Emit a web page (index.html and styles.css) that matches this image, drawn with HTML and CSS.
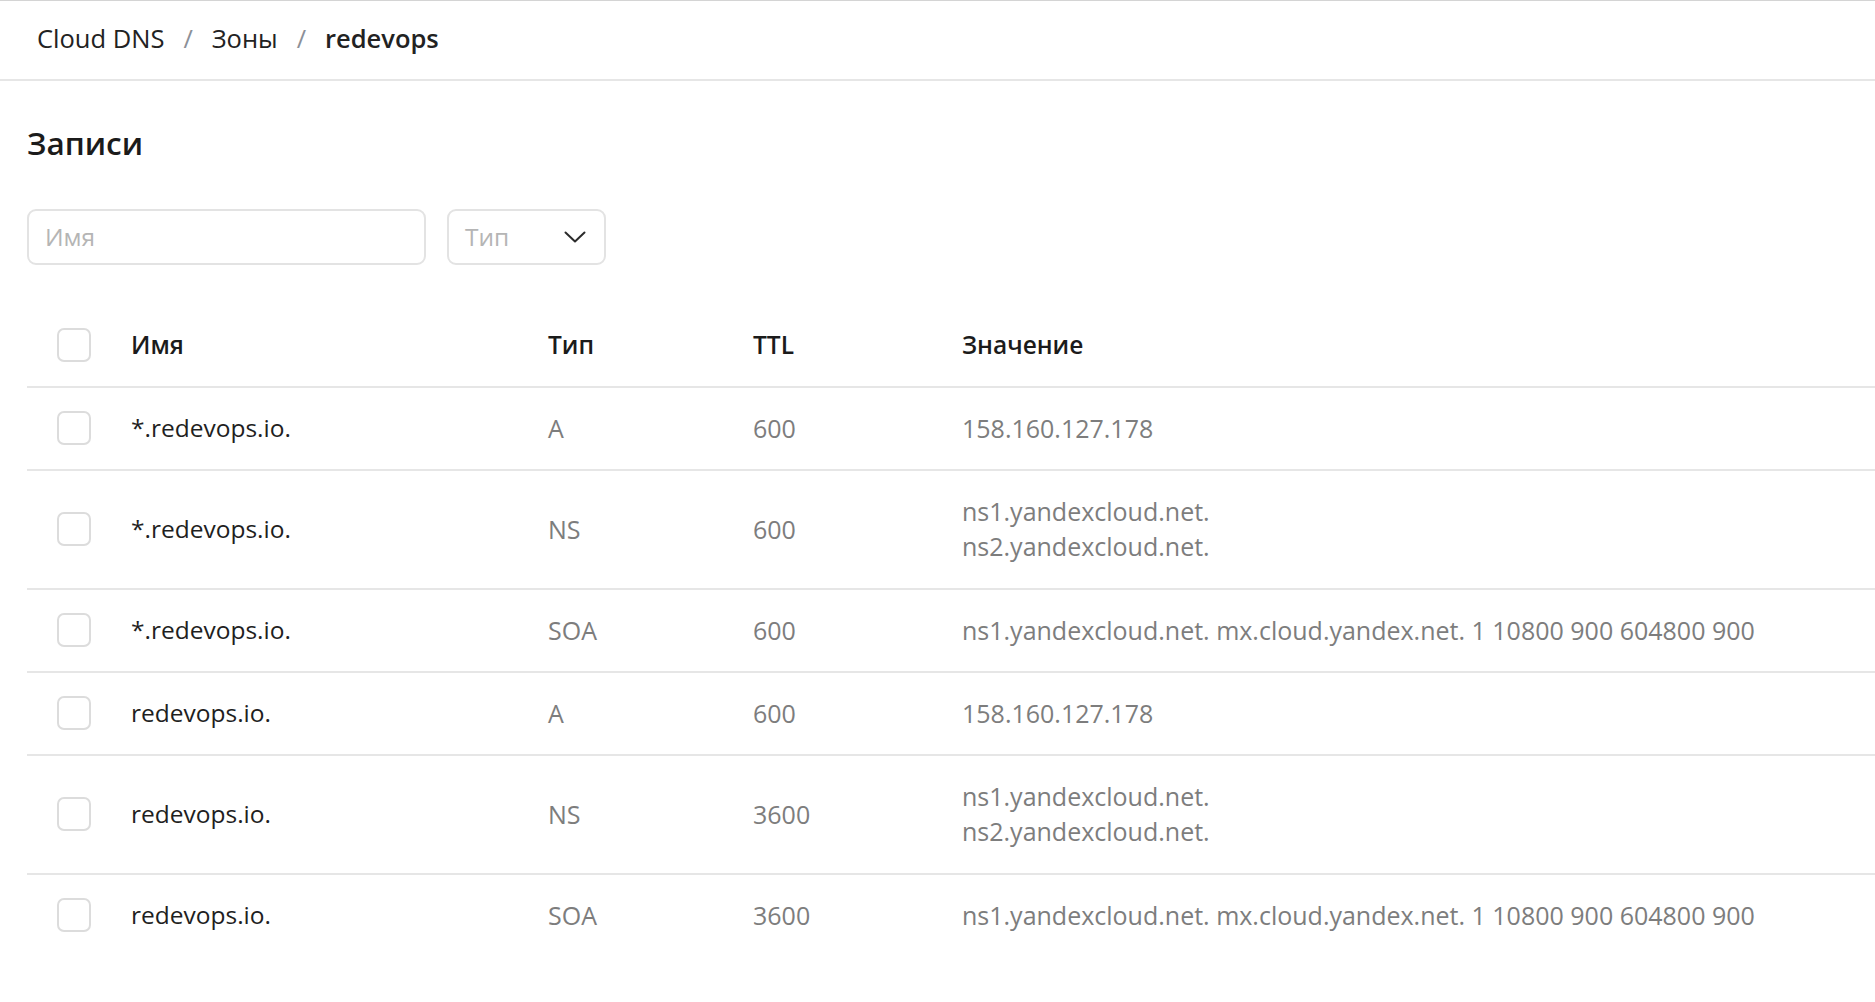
FILE: index.html
```html
<!DOCTYPE html>
<html lang="ru">
<head>
<meta charset="utf-8">
<title>Cloud DNS — redevops</title>
<link rel="stylesheet" href="styles.css">
</head>
<body>
<header class="topbar">
  <nav class="crumbs">
    <span class="crumb">Cloud DNS</span>
    <span class="sep">/</span>
    <span class="crumb">Зоны</span>
    <span class="sep">/</span>
    <span class="crumb current">redevops</span>
  </nav>
</header>
<main class="content">
  <h1 class="title">Записи</h1>
  <div class="filters">
    <div class="input"><span class="placeholder">Имя</span></div>
    <div class="select">
      <span class="placeholder">Тип</span>
      <svg class="chev" width="22" height="12" viewBox="0 0 22 12"><path d="M1.5 1.5 L11 10.5 L20.5 1.5" fill="none" stroke="#2b2b2b" stroke-width="2" stroke-linecap="round" stroke-linejoin="round"/></svg>
    </div>
  </div>
  <table class="records">
    <colgroup>
      <col class="c-check"><col class="c-name"><col class="c-type"><col class="c-ttl"><col class="c-value">
    </colgroup>
    <thead>
      <tr>
        <th><span class="box"></span></th>
        <th>Имя</th>
        <th>Тип</th>
        <th>TTL</th>
        <th>Значение</th>
      </tr>
    </thead>
    <tbody>
      <tr>
        <td><span class="box"></span></td>
        <td class="name">*.redevops.io.</td>
        <td class="muted">A</td>
        <td class="muted">600</td>
        <td class="muted">158.160.127.178</td>
      </tr>
      <tr>
        <td><span class="box"></span></td>
        <td class="name">*.redevops.io.</td>
        <td class="muted">NS</td>
        <td class="muted">600</td>
        <td class="muted"><div class="line">ns1.yandexcloud.net.</div><div class="line">ns2.yandexcloud.net.</div></td>
      </tr>
      <tr>
        <td><span class="box"></span></td>
        <td class="name">*.redevops.io.</td>
        <td class="muted">SOA</td>
        <td class="muted">600</td>
        <td class="muted">ns1.yandexcloud.net. mx.cloud.yandex.net. 1 10800 900 604800 900</td>
      </tr>
      <tr>
        <td><span class="box"></span></td>
        <td class="name">redevops.io.</td>
        <td class="muted">A</td>
        <td class="muted">600</td>
        <td class="muted">158.160.127.178</td>
      </tr>
      <tr>
        <td><span class="box"></span></td>
        <td class="name">redevops.io.</td>
        <td class="muted">NS</td>
        <td class="muted">3600</td>
        <td class="muted"><div class="line">ns1.yandexcloud.net.</div><div class="line">ns2.yandexcloud.net.</div></td>
      </tr>
      <tr>
        <td><span class="box"></span></td>
        <td class="name">redevops.io.</td>
        <td class="muted">SOA</td>
        <td class="muted">3600</td>
        <td class="muted">ns1.yandexcloud.net. mx.cloud.yandex.net. 1 10800 900 604800 900</td>
      </tr>
    </tbody>
  </table>
</main>
</body>
</html>
```

FILE: styles.css
```css
* { box-sizing: border-box; }
html, body { margin: 0; padding: 0; background: #fff; }
body {
  font-family: "Open Sans", "Noto Sans", sans-serif;
  color: #1f1f1f;
  font-size: 24px;
}
.topbar {
  height: 81px;
  border-top: 1px solid #d4d4d4;
  border-bottom: 2px solid #e6e6e6;
  display: flex;
  align-items: center;
  padding-left: 37px;
  padding-bottom: 4px;
}
.crumbs {
  display: flex;
  align-items: center;
  font-size: 25.5px;
  color: #222;
}
.sep {
  color: #8c9098;
  margin: 0 19px;
}
.current { font-weight: 600; }
.content { padding-left: 27px; }
.title {
  margin: 0;
  padding-top: 42px;
  font-size: 31.5px;
  font-weight: 600;
  line-height: 40px;
  color: #1b1b1b;
}
.filters {
  display: flex;
  gap: 21px;
  margin-top: 46px;
}
.input, .select {
  height: 56px;
  border: 2px solid #e3e3e3;
  border-radius: 9px;
  display: flex;
  align-items: center;
  padding-left: 16px;
  padding-bottom: 2px;
}
.input { width: 399px; }
.select {
  width: 159px;
  justify-content: space-between;
  padding-right: 18px;
}
.placeholder { color: #b5b5b5; font-size: 24.5px; }
.chev { display: block; margin-top: 2px; }
.records {
  width: 100%;
  margin-top: 39px;
  border-collapse: collapse;
  table-layout: fixed;
}
.c-check { width: 104px; }
.c-name { width: 417px; }
.c-type { width: 205px; }
.c-ttl { width: 209px; }
.records th, .records td {
  text-align: left;
  vertical-align: middle;
  line-height: 34px;
  border-bottom: 2px solid #e6e6e6;
}
.records th { padding: 24px 0; }
.records td { padding: 23px 0 24px; }
.records td .line { line-height: 35px; }
.records tbody tr:last-child td { border-bottom: none; }
.records th {
  font-weight: 600;
  font-size: 24.5px;
  color: #1b1b1b;
}
.records th:first-child, .records td:first-child { padding-left: 30px; }
.box {
  display: block;
  width: 34px;
  height: 34px;
  border: 2px solid #dcdcdc;
  border-radius: 7px;
}
.name { color: #1f1f1f; font-size: 24.5px; }
.muted { color: #7d7d7d; font-size: 25px; }
```
